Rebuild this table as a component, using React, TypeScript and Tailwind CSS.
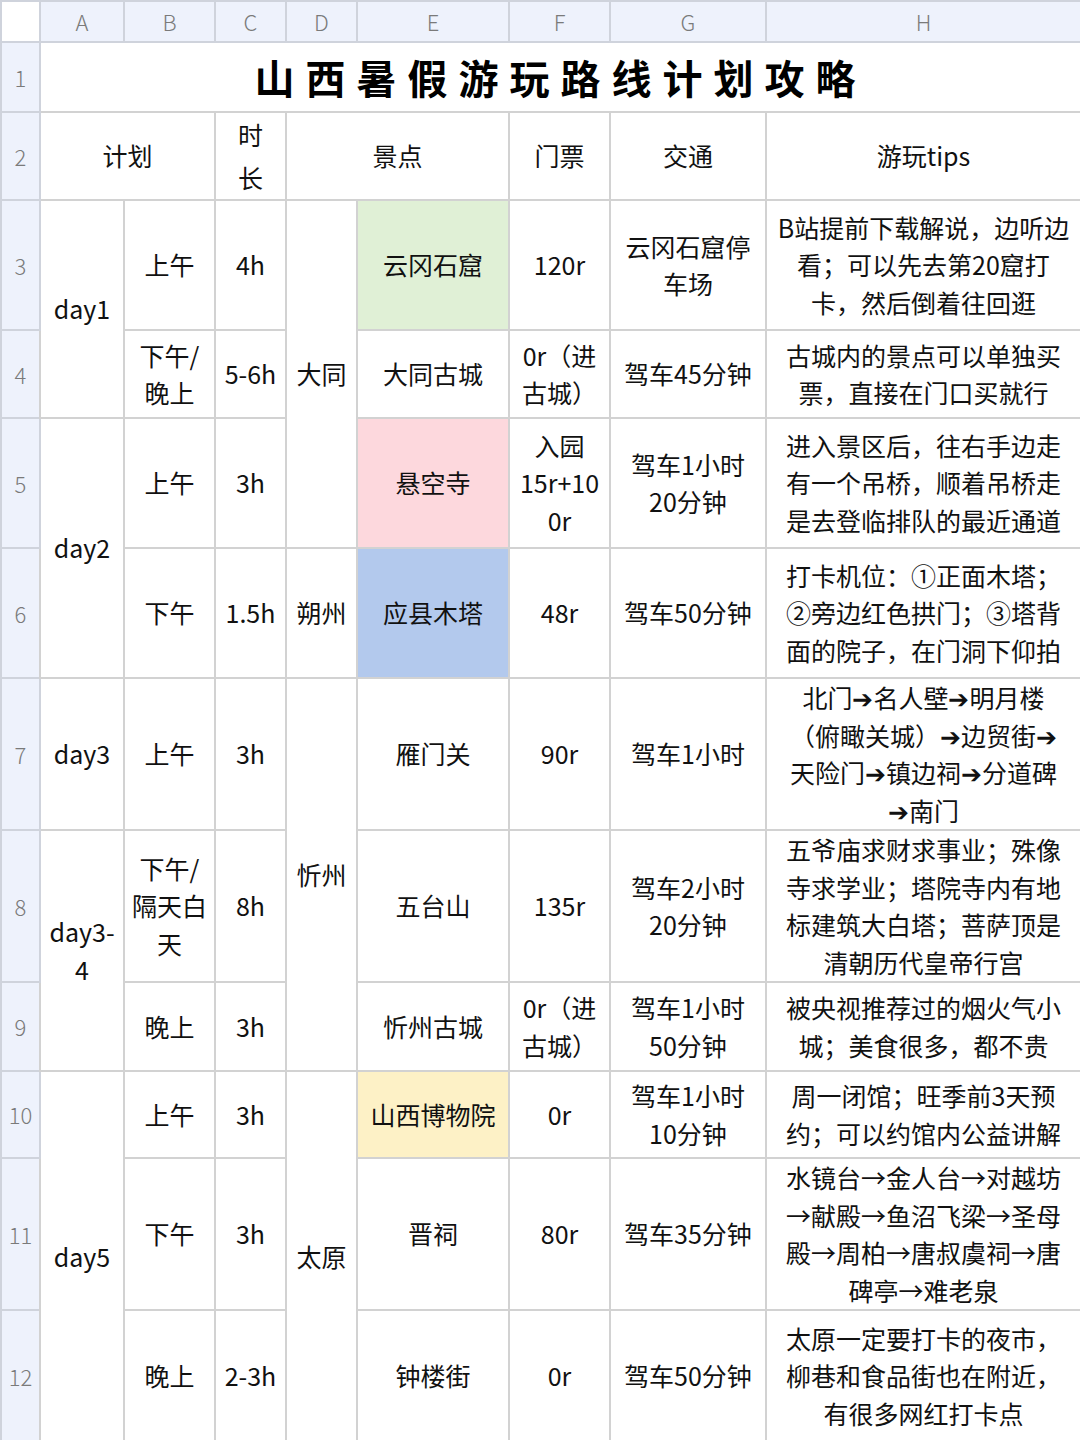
const font = { fontFamily: '"Noto Sans CJK SC", "Noto Sans", sans-serif' };

type CellProps = {
  lines: string[];
  rowSpan?: number;
  colSpan?: number;
  bg?: string;
};

function Cell({ lines, rowSpan, colSpan, bg = "bg-white" }: CellProps) {
  return (
    <td
      rowSpan={rowSpan}
      colSpan={colSpan}
      className={`border-2 border-[#d2d2d2] ${bg} px-1 text-center align-middle text-[25px] leading-[37.5px] text-[#111] whitespace-nowrap`}
    >
      {lines.map((l, i) => (
        <div key={i}>{l}</div>
      ))}
    </td>
  );
}

function RowHead({ n }: { n: number }) {
  return (
    <td className="border-2 border-[#cfd3dc] bg-[#eef2fc] text-center align-middle text-[22px] font-light text-[#7a7a7a]">
      {n}
    </td>
  );
}

const cols = ["A", "B", "C", "D", "E", "F", "G", "H"];
const widths = ["w-[39px]", "w-[84px]", "w-[91px]", "w-[71px]", "w-[71px]", "w-[152px]", "w-[101px]", "w-[156px]", "w-[315px]"];

export default function App() {
  return (
    <div className="h-[1440px] w-[1080px] overflow-hidden bg-white" style={font}>
      <table className="w-[1080px] table-fixed border-collapse">
        <colgroup>
          {widths.map((w) => (
            <col key={w} className={w} />
          ))}
        </colgroup>
        <tbody>
          <tr className="h-[41px]">
            <td className="border-2 border-[#cfd3dc] bg-white" />
            {cols.map((c) => (
              <td
                key={c}
                className="border-2 border-[#cfd3dc] bg-[#eef2fc] text-center align-middle text-[22px] font-light text-[#7a7a7a]"
              >
                {c}
              </td>
            ))}
          </tr>
          <tr className="h-[70px]">
            <RowHead n={1} />
            <td
              colSpan={8}
              className="border-2 border-[#d2d2d2] text-center align-middle text-[40px] font-bold tracking-[11px] text-black"
            >
              山西暑假游玩路线计划攻略
            </td>
          </tr>
          <tr className="h-[86px]">
            <RowHead n={2} />
            <Cell colSpan={2} lines={["计划"]} />
            <td className="border-2 border-[#d2d2d2] text-center align-middle text-[25px] leading-[43px] text-[#111]">
              <div>时</div>
              <div>长</div>
            </td>
            <Cell colSpan={2} lines={["景点"]} />
            <Cell lines={["门票"]} />
            <Cell lines={["交通"]} />
            <Cell lines={["游玩tips"]} />
          </tr>
          <tr className="h-[130px]">
            <RowHead n={3} />
            <Cell rowSpan={2} lines={["day1"]} />
            <Cell lines={["上午"]} />
            <Cell lines={["4h"]} />
            <Cell rowSpan={3} lines={["大同"]} />
            <Cell lines={["云冈石窟"]} bg="bg-[#e0f0d6]" />
            <Cell lines={["120r"]} />
            <Cell lines={["云冈石窟停", "车场"]} />
            <Cell lines={["B站提前下载解说，边听边", "看；可以先去第20窟打", "卡，然后倒着往回逛"]} />
          </tr>
          <tr className="h-[88px]">
            <RowHead n={4} />
            <Cell lines={["下午/", "晚上"]} />
            <Cell lines={["5-6h"]} />
            <Cell lines={["大同古城"]} />
            <Cell lines={["0r（进", "古城）"]} />
            <Cell lines={["驾车45分钟"]} />
            <Cell lines={["古城内的景点可以单独买", "票，直接在门口买就行"]} />
          </tr>
          <tr className="h-[130px]">
            <RowHead n={5} />
            <Cell rowSpan={2} lines={["day2"]} />
            <Cell lines={["上午"]} />
            <Cell lines={["3h"]} />
            <Cell lines={["悬空寺"]} bg="bg-[#fdd8dd]" />
            <Cell lines={["入园", "15r+10", "0r"]} />
            <Cell lines={["驾车1小时", "20分钟"]} />
            <Cell lines={["进入景区后，往右手边走", "有一个吊桥，顺着吊桥走", "是去登临排队的最近通道"]} />
          </tr>
          <tr className="h-[130px]">
            <RowHead n={6} />
            <Cell lines={["下午"]} />
            <Cell lines={["1.5h"]} />
            <Cell lines={["朔州"]} />
            <Cell lines={["应县木塔"]} bg="bg-[#b3c9ed]" />
            <Cell lines={["48r"]} />
            <Cell lines={["驾车50分钟"]} />
            <Cell lines={["打卡机位：①正面木塔；", "②旁边红色拱门；③塔背", "面的院子，在门洞下仰拍"]} />
          </tr>
          <tr className="h-[152px]">
            <RowHead n={7} />
            <Cell lines={["day3"]} />
            <Cell lines={["上午"]} />
            <Cell lines={["3h"]} />
            <Cell rowSpan={3} lines={["忻州"]} />
            <Cell lines={["雁门关"]} />
            <Cell lines={["90r"]} />
            <Cell lines={["驾车1小时"]} />
            <Cell lines={["北门➔名人壁➔明月楼", "（俯瞰关城）➔边贸街➔", "天险门➔镇边祠➔分道碑", "➔南门"]} />
          </tr>
          <tr className="h-[152px]">
            <RowHead n={8} />
            <Cell rowSpan={2} lines={["day3-", "4"]} />
            <Cell lines={["下午/", "隔天白", "天"]} />
            <Cell lines={["8h"]} />
            <Cell lines={["五台山"]} />
            <Cell lines={["135r"]} />
            <Cell lines={["驾车2小时", "20分钟"]} />
            <Cell lines={["五爷庙求财求事业；殊像", "寺求学业；塔院寺内有地", "标建筑大白塔；菩萨顶是", "清朝历代皇帝行宫"]} />
          </tr>
          <tr className="h-[89px]">
            <RowHead n={9} />
            <Cell lines={["晚上"]} />
            <Cell lines={["3h"]} />
            <Cell lines={["忻州古城"]} />
            <Cell lines={["0r（进", "古城）"]} />
            <Cell lines={["驾车1小时", "50分钟"]} />
            <Cell lines={["被央视推荐过的烟火气小", "城；美食很多，都不贵"]} />
          </tr>
          <tr className="h-[87px]">
            <RowHead n={10} />
            <Cell rowSpan={3} lines={["day5"]} />
            <Cell lines={["上午"]} />
            <Cell lines={["3h"]} />
            <Cell rowSpan={3} lines={["太原"]} />
            <Cell lines={["山西博物院"]} bg="bg-[#fdf1c6]" />
            <Cell lines={["0r"]} />
            <Cell lines={["驾车1小时", "10分钟"]} />
            <Cell lines={["周一闭馆；旺季前3天预", "约；可以约馆内公益讲解"]} />
          </tr>
          <tr className="h-[152px]">
            <RowHead n={11} />
            <Cell lines={["下午"]} />
            <Cell lines={["3h"]} />
            <Cell lines={["晋祠"]} />
            <Cell lines={["80r"]} />
            <Cell lines={["驾车35分钟"]} />
            <Cell lines={["水镜台→金人台→对越坊", "→献殿→鱼沼飞梁→圣母", "殿→周柏→唐叔虞祠→唐", "碑亭→难老泉"]} />
          </tr>
          <tr className="h-[132px]">
            <RowHead n={12} />
            <Cell lines={["晚上"]} />
            <Cell lines={["2-3h"]} />
            <Cell lines={["钟楼街"]} />
            <Cell lines={["0r"]} />
            <Cell lines={["驾车50分钟"]} />
            <Cell lines={["太原一定要打卡的夜市，", "柳巷和食品街也在附近，", "有很多网红打卡点"]} />
          </tr>
        </tbody>
      </table>
    </div>
  );
}
